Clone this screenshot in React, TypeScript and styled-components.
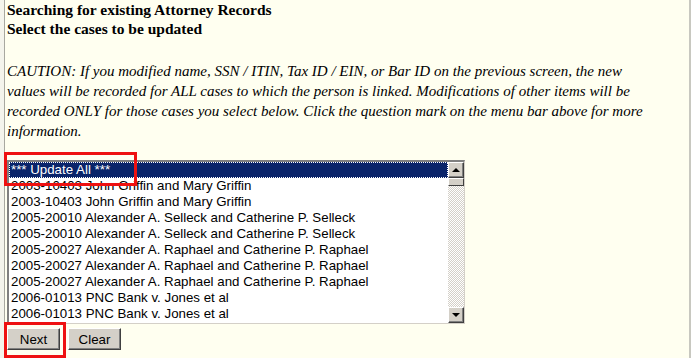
import * as React from 'react'
import styled, { createGlobalStyle } from 'styled-components'

const GlobalStyle = createGlobalStyle`
    html, body {
        margin: 0;
        padding: 0;
        background: #fffff0;
    }
`

const Frame = styled.div`
    position: relative;
    display: flex;
    width: 691px;
    height: 358px;
    overflow: hidden;
    background: #fffff0;
`

const LeftStrip = styled.div`
    width: 4px;
    border-right: 1px solid #a8a8a0;
    background: #f4f4ec;
`

const Content = styled.div`
    flex: 1;
    padding: 0 0 0 2px;
    border-right: 2px solid #c8c8c0;
`

const Heading = styled.div`
    font-family: "Liberation Serif", serif;
    font-weight: bold;
    font-size: 15.5px;
    line-height: 19px;
    color: #000;
`

const Caution = styled.p`
    margin: 23px 0 0 0;
    font-family: "Liberation Serif", serif;
    font-style: italic;
    font-size: 15px;
    line-height: 20px;
    color: #000;
    white-space: nowrap;
`

const ListBox = styled.div`
    position: relative;
    display: flex;
    width: 455px;
    height: 161px;
    margin-top: 19px;
    border-top: 2px solid #808080;
    border-left: 2px solid #808080;
    border-right: 1px solid #d4d0c8;
    border-bottom: 1px solid #d4d0c8;
    background: #fff;
`

const Items = styled.div`
    flex: 1;
    overflow: hidden;
`

const Item = styled.div<{ $selected?: boolean }>`
    height: 16px;
    line-height: 16px;
    padding-left: 2px;
    font-family: "Liberation Sans", Arial, sans-serif;
    font-size: 13.3px;
    white-space: nowrap;
    color: ${(p) => (p.$selected ? '#fff' : '#000')};
    background: ${(p) => (p.$selected ? '#0a246a' : 'transparent')};
    outline: ${(p) => (p.$selected ? '1px dotted #ffffff' : 'none')};
    outline-offset: -1px;
`

const ScrollBar = styled.div`
    display: flex;
    flex-direction: column;
    width: 16px;
    background-color: #eeeee8;
    background-image: repeating-conic-gradient(#d4d0c8 0% 25%, #ffffff 0% 50%);
    background-size: 2px 2px;
`

const ScrollButton = styled.div`
    display: flex;
    align-items: center;
    justify-content: center;
    width: 16px;
    height: 16px;
    box-sizing: border-box;
    background: #d4d0c8;
    border-top: 1px solid #fff;
    border-left: 1px solid #fff;
    border-right: 1px solid #404040;
    border-bottom: 1px solid #404040;
    box-shadow: inset -1px -1px 0 #808080;
`

const Thumb = styled.div`
    height: 8px;
    box-sizing: border-box;
    background: #d4d0c8;
    border-top: 1px solid #fff;
    border-left: 1px solid #fff;
    border-right: 1px solid #404040;
    border-bottom: 1px solid #404040;
`

const Track = styled.div`
    flex: 1;
`

const Arrow = styled.div<{ $down?: boolean }>`
    width: 0;
    height: 0;
    border-left: 4px solid transparent;
    border-right: 4px solid transparent;
    ${(p) => (p.$down ? 'border-top: 4px solid #000;' : 'border-bottom: 4px solid #000;')}
`

const ButtonRow = styled.div`
    display: flex;
    gap: 8px;
    margin-top: 4px;
`

const Button = styled.button`
    width: 53px;
    height: 22px;
    padding: 0;
    box-sizing: border-box;
    font-family: "Liberation Sans", Arial, sans-serif;
    font-size: 13.3px;
    color: #000;
    background: #d4d0c8;
    border-top: 1px solid #fff;
    border-left: 1px solid #fff;
    border-right: 1px solid #404040;
    border-bottom: 1px solid #404040;
    box-shadow: inset -1px -1px 0 #808080;
`

const Highlight = styled.div`
    position: absolute;
    box-sizing: border-box;
    border: 3px solid #ee1111;
    pointer-events: none;
`

const cases = [
    '2003-10403 John Griffin and Mary Griffin',
    '2003-10403 John Griffin and Mary Griffin',
    '2005-20010 Alexander A. Selleck and Catherine P. Selleck',
    '2005-20010 Alexander A. Selleck and Catherine P. Selleck',
    '2005-20027 Alexander A. Raphael and Catherine P. Raphael',
    '2005-20027 Alexander A. Raphael and Catherine P. Raphael',
    '2005-20027 Alexander A. Raphael and Catherine P. Raphael',
    '2006-01013 PNC Bank v. Jones et al',
    '2006-01013 PNC Bank v. Jones et al',
]

export default function App() {
    return (
        <Frame>
            <GlobalStyle />
            <LeftStrip />
            <Content>
                <Heading>
                    Searching for existing Attorney Records
                    <br />
                    Select the cases to be updated
                </Heading>
                <Caution>
                    CAUTION: If you modified name, SSN / ITIN, Tax ID / EIN, or Bar ID on the previous screen, the new
                    <br />
                    values will be recorded for ALL cases to which the person is linked. Modifications of other items will be
                    <br />
                    recorded ONLY for those cases you select below. Click the question mark on the menu bar above for more
                    <br />
                    information.
                </Caution>
                <ListBox>
                    <Items>
                        <Item $selected>*** Update All ***</Item>
                        {cases.map((c, i) => (
                            <Item key={i}>{c}</Item>
                        ))}
                    </Items>
                    <ScrollBar>
                        <ScrollButton>
                            <Arrow />
                        </ScrollButton>
                        <Thumb />
                        <Track />
                        <ScrollButton>
                            <Arrow $down />
                        </ScrollButton>
                    </ScrollBar>
                </ListBox>
                <ButtonRow>
                    <Button>Next</Button>
                    <Button>Clear</Button>
                </ButtonRow>
            </Content>
            <Highlight style={{ left: 4, top: 152, width: 133, height: 34 }} />
            <Highlight style={{ left: 4, top: 322, width: 62, height: 36 }} />
        </Frame>
    )
}
